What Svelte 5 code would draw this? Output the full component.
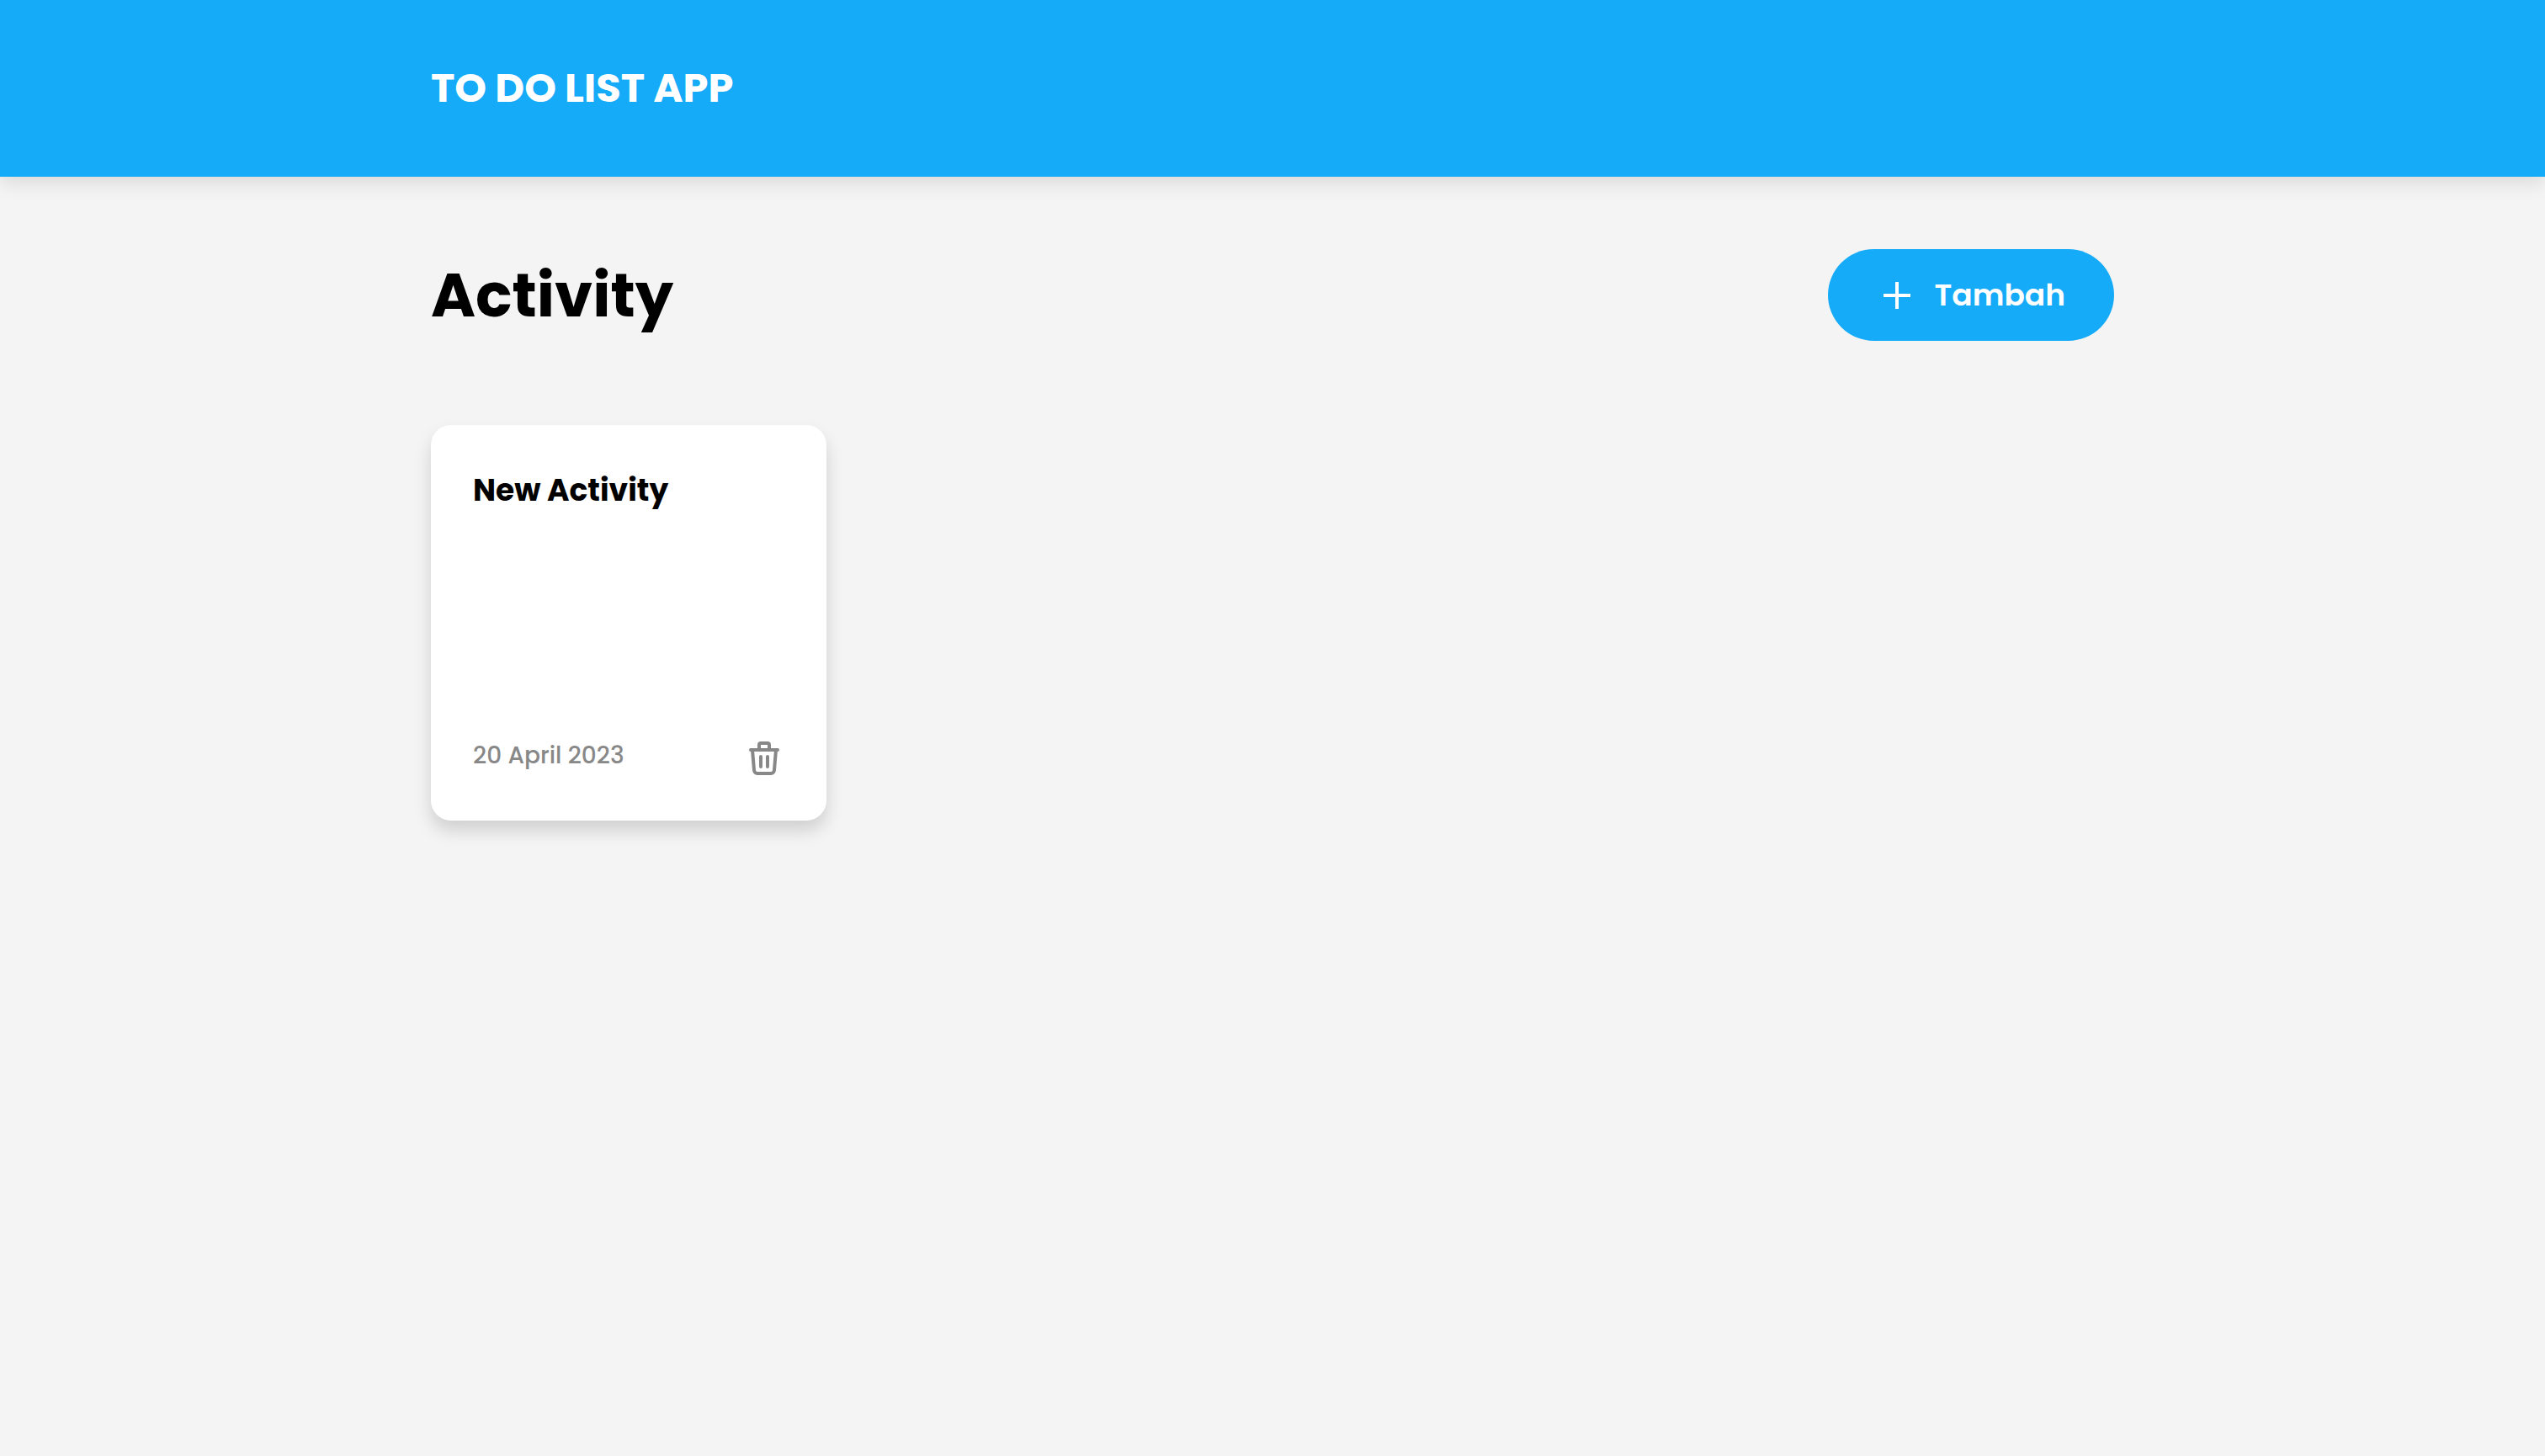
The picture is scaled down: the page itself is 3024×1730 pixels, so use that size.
<script>
  let activities = $state([{ id: 1, title: 'New Activity', date: '20 April 2023' }]);
  let nextId = 2;

  function add() {
    const date = new Date().toLocaleDateString('id-ID', { day: 'numeric', month: 'long', year: 'numeric' });
    activities.unshift({ id: nextId++, title: 'New Activity', date });
  }

  function remove(id) {
    activities = activities.filter((item) => item.id !== id);
  }
</script>

<div class="page">
  <header class="header">
    <div class="container">
      <h2 class="brand">TO DO LIST APP</h2>
    </div>
  </header>

  <main class="container">
    <div class="toolbar">
      <h1 class="title">Activity</h1>
      <button class="add" type="button" onclick={add}>
        <svg viewBox="0 0 48 48" aria-hidden="true">
          <path d="M24 8v32M8 24h32" />
        </svg>
        <span>Tambah</span>
      </button>
    </div>

    <div class="grid">
      {#each activities as item (item.id)}
        <article class="card">
          <h4 class="card-title">{item.title}</h4>
          <footer class="card-footer">
            <span class="date">{item.date}</span>
            <button class="delete" type="button" aria-label="Delete activity" onclick={() => remove(item.id)}>
              <svg viewBox="0 0 48 48" aria-hidden="true">
                <path d="M8 14h32" />
                <path d="M10 14l2 24a4 4 0 0 0 4 4h16a4 4 0 0 0 4-4l2-24" />
                <path d="M18 14V8a2 2 0 0 1 2-2h8a2 2 0 0 1 2 2v6" />
                <path d="M20 22v12M28 22v12" />
              </svg>
            </button>
          </footer>
        </article>
      {/each}
    </div>
  </main>
</div>

<style>
  :global(body) {
    background: #f4f4f4;
  }

  .page {
    min-height: 100vh;
    font-family: Poppins, Inter, sans-serif;
    color: #000;
  }

  .header {
    display: flex;
    align-items: center;
    height: 210px;
    background: #16abf8;
    box-shadow: 0 8px 20px rgba(0, 0, 0, 0.1);
  }

  .container {
    box-sizing: border-box;
    width: 100%;
    max-width: 2000px;
    margin: 0 auto;
  }

  .brand,
  .title,
  .card-title {
    margin: 0;
    font-weight: 700;
  }

  .brand {
    font-size: 48px;
    line-height: 72px;
    color: #fff;
  }

  .toolbar {
    display: flex;
    align-items: center;
    justify-content: space-between;
    padding: 86px 0 100px;
  }

  .title {
    font-size: 72px;
    line-height: 108px;
  }

  .add {
    display: flex;
    align-items: center;
    gap: 20px;
    height: 109px;
    padding: 0 58px;
    border: 0;
    border-radius: 56px;
    background: #16abf8;
    color: #fff;
    font: inherit;
    font-size: 36px;
    font-weight: 600;
    cursor: pointer;
  }

  svg {
    display: block;
    width: 48px;
    height: 48px;
    fill: none;
    stroke: currentColor;
    stroke-width: 4;
  }

  .grid {
    display: grid;
    grid-template-columns: repeat(4, 1fr);
    gap: 40px;
  }

  .card {
    display: flex;
    flex-direction: column;
    justify-content: space-between;
    box-sizing: border-box;
    aspect-ratio: 1;
    padding: 50px;
    border-radius: 24px;
    background: #fff;
    box-shadow: 0 12px 20px rgba(0, 0, 0, 0.15);
  }

  .card-title {
    font-size: 36px;
    line-height: 56px;
  }

  .card-footer {
    display: flex;
    align-items: flex-start;
    justify-content: space-between;
    color: #888;
  }

  .date {
    font-size: 28px;
    line-height: 42px;
    font-weight: 500;
  }

  .delete {
    padding: 0;
    border: 0;
    background: none;
    color: inherit;
    cursor: pointer;
  }

  .delete svg {
    stroke-linecap: round;
    stroke-linejoin: round;
  }
</style>
